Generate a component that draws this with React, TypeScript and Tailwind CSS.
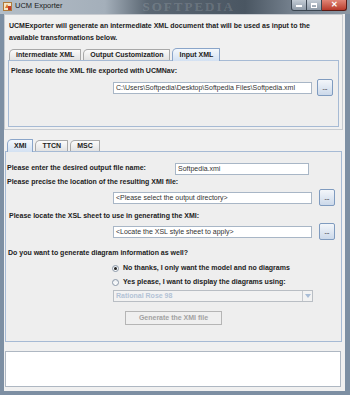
import React from 'react'

const txt = "font-['Liberation_Sans',Arial,sans-serif]"

function Tab({ label, selected }: { label: string; selected?: boolean }) {
  if (selected) {
    return (
      <div className="relative z-10 -mb-px h-[13px] rounded-tl-[5px] rounded-tr-[1px] border border-b-0 border-[#8aa5c9] bg-gradient-to-b from-[#f4f8fc] to-[#d3e1f2] px-[6px] text-[7px] font-bold leading-[12px] text-[#222]">
        {label}
      </div>
    )
  }
  return (
    <div className="mt-[1px] h-[11px] rounded-tl-[5px] rounded-tr-[1px] border border-b-0 border-[#a8a8a8] bg-gradient-to-b from-[#fbfbfb] to-[#e2e2e2] px-[6px] text-[7px] font-bold leading-[10px] text-[#222]">
      {label}
    </div>
  )
}

function Field({ value, className = '' }: { value: string; className?: string }) {
  return (
    <div className={`h-[12px] overflow-hidden whitespace-nowrap border border-[#a8b6c6] bg-white pl-[2px] text-[7px] leading-[10px] text-[#333] ${className}`}>
      {value}
    </div>
  )
}

function DotsButton() {
  return (
    <div className="flex h-[17px] w-[16px] items-end justify-center rounded-[2px] border border-[#7f9bbf] bg-gradient-to-b from-[#f3f6fa] to-[#ccd9ea] pb-[4px] text-[6px] font-bold leading-[6px] text-[#333]">
      ...
    </div>
  )
}

function Radio({ checked, label }: { checked?: boolean; label: string }) {
  return (
    <div className="flex h-[12px] items-center">
      <div className="ml-[106px] flex h-[7px] w-[7px] items-center justify-center rounded-full border border-[#8a98a8] bg-gradient-to-b from-[#e8ecf0] to-white">
        {checked && <div className="h-[3px] w-[3px] rounded-full bg-[#222]" />}
      </div>
      <span className="ml-[4px] text-[7px] font-bold text-[#222]">{label}</span>
    </div>
  )
}

export default function App() {
  return (
    <div className={`h-[395px] w-[350px] overflow-hidden bg-[#7d8fa3] ${txt}`}>
      {/* title bar */}
      <div className="flex h-[14px] items-start bg-[linear-gradient(90deg,#b3bdc7_0%,#a4afba_30%,#5b6773_42%,#4a5662_70%,#76828f_84%,#8c98a5_100%)]">
        <svg width="9" height="9" viewBox="0 0 9 9" className="ml-[3px] mt-[2px]">
          <rect x="0.5" y="0.5" width="8" height="8" fill="#f4e6c8" stroke="#b07a3a" />
          <path d="M2 6 L4 2 L6 6 Z" fill="#e0782a" />
          <rect x="5" y="4" width="3" height="4" fill="#c0392b" />
        </svg>
        <span className="ml-[3px] mt-[1px] text-[7.5px] leading-[10px] text-[#1b1b1b]">UCM Exporter</span>
        <span className="ml-[80px] mt-0 font-['Liberation_Serif',serif] text-[13px] font-bold leading-[14px] tracking-[2px] text-white/15">SOFTPEDIA</span>
        <div className="ml-auto mr-[3px] flex">
          <div className="flex h-[11px] w-[16px] items-center justify-center rounded-bl-[3px] border border-t-0 border-[#3b4651] bg-gradient-to-b from-[#c3ccd5] to-[#8e9aa7]">
            <div className="mt-[2px] h-[2px] w-[6px] bg-white" />
          </div>
          <div className="flex h-[11px] w-[15px] items-center justify-center border border-l-0 border-t-0 border-[#3b4651] bg-gradient-to-b from-[#c3ccd5] to-[#8e9aa7]">
            <div className="h-[5px] w-[6px] border border-t-2 border-white" />
          </div>
          <div className="flex h-[11px] w-[25px] items-center justify-center rounded-br-[3px] border border-l-0 border-t-0 border-[#5a1a14] bg-gradient-to-b from-[#e08576] to-[#b8392a] text-[8px] font-bold leading-[8px] text-white">
            ✕
          </div>
        </div>
      </div>

      {/* client area */}
      <div className="ml-[4px] mr-[5px] h-[377px] bg-[#f0f0f0] text-[#222]">
        {/* top section */}
        <div className="mr-[-1px] w-[339px] border border-[#c8ccd1] px-0 pb-[2px] pt-[5px]">
          <div className="pl-[4px] text-[7px] font-bold leading-[12px]">
            UCMExporter will generate an intermediate XML document that will be used as input to the
            <br />
            available transformations below.
          </div>
          <div className="ml-[3px] mt-[4px] flex h-[12px] items-end gap-[2px] pl-[1px]">
            <Tab label="intermediate XML" />
            <Tab label="Output Customization" />
            <Tab label="Input XML" selected />
          </div>
          <div className="mx-[3px] h-[67px] border border-[#a6bad4] bg-[#eeeeee]">
            <div className="mt-[4px] pl-[2px] text-[7px] font-bold leading-[12px]">
              Please locate the XML file exported with UCMNav:
            </div>
            <div className="mt-[2px] flex h-[17px] items-center">
              <Field className="ml-[104px] w-[199px]" value="C:\Users\Softpedia\Desktop\Softpedia Files\Softpedia.xml" />
              <div className="ml-[5px]">
                <DotsButton />
              </div>
            </div>
          </div>
        </div>

        {/* bottom tabs */}
        <div className="ml-[3px] mt-[10px] flex h-[11px] items-end gap-[2px]">
          <Tab label="XMI" selected />
          <Tab label="TTCN" />
          <Tab label="MSC" />
        </div>
        <div className="ml-[1px] mr-[3px] h-[191px] border border-[#a6bad4] bg-[#eeeeee]">
          <div className="mt-[10px] flex h-[13px] items-center">
            <div className="w-[169px] pl-[1px] text-[7px] font-bold">Please enter the desired output file name:</div>
            <Field className="w-[134px]" value="Softpedia.xmi" />
          </div>
          <div className="mt-[1px] pl-[1px] text-[7px] font-bold leading-[12px]">
            Please precise the location of the resulting XMI file:
          </div>
          <div className="mt-[1px] flex h-[17px] items-center">
            <Field className="ml-[107px] w-[199px]" value="<Please select the output directory>" />
            <div className="ml-[7px]">
              <DotsButton />
            </div>
          </div>
          <div className="mt-[4px] pl-[3px] text-[7px] font-bold leading-[12px]">
            Please locate the XSL sheet to use in generating the XMI:
          </div>
          <div className="mt-[1px] flex h-[17px] items-center">
            <Field className="ml-[107px] w-[199px]" value="<Locate the XSL style sheet to apply>" />
            <div className="ml-[7px]">
              <DotsButton />
            </div>
          </div>
          <div className="mt-[7px] pl-[2px] text-[7px] font-bold leading-[12px]">
            Do you want to generate diagram information as well?
          </div>
          <div className="mt-[3px]">
            <Radio checked label="No thanks, I only want the model and no diagrams" />
          </div>
          <div className="mt-[2px]">
            <Radio label="Yes please, I want to display the diagrams using:" />
          </div>
          <div className="ml-[107px] mt-[2px] flex h-[12px] w-[200px] border border-[#b9bec4] bg-[#f2f2f2]">
            <div className="flex-1 pl-[2px] text-[7px] font-bold leading-[10px] text-[#b3c3d6]">Rational Rose 98</div>
            <div className="flex w-[10px] items-center justify-center border-l border-[#c4c8cd]">
              <svg width="6" height="4" viewBox="0 0 6 4">
                <path d="M0 0 L6 0 L3 4 Z" fill="#a9bdd6" />
              </svg>
            </div>
          </div>
          <div className="ml-[119px] mt-[9px] flex h-[14px] w-[97px] items-center justify-center border border-[#b5b5b5] bg-[#efefef] text-[7px] font-bold text-[#a2a2a2]">
            Generate the XMI file
          </div>
        </div>

        {/* output area */}
        <div className="ml-[1px] mr-[4px] mt-[9px] h-[36px] border border-[#aeb7c2] bg-white" />
      </div>
    </div>
  )
}
